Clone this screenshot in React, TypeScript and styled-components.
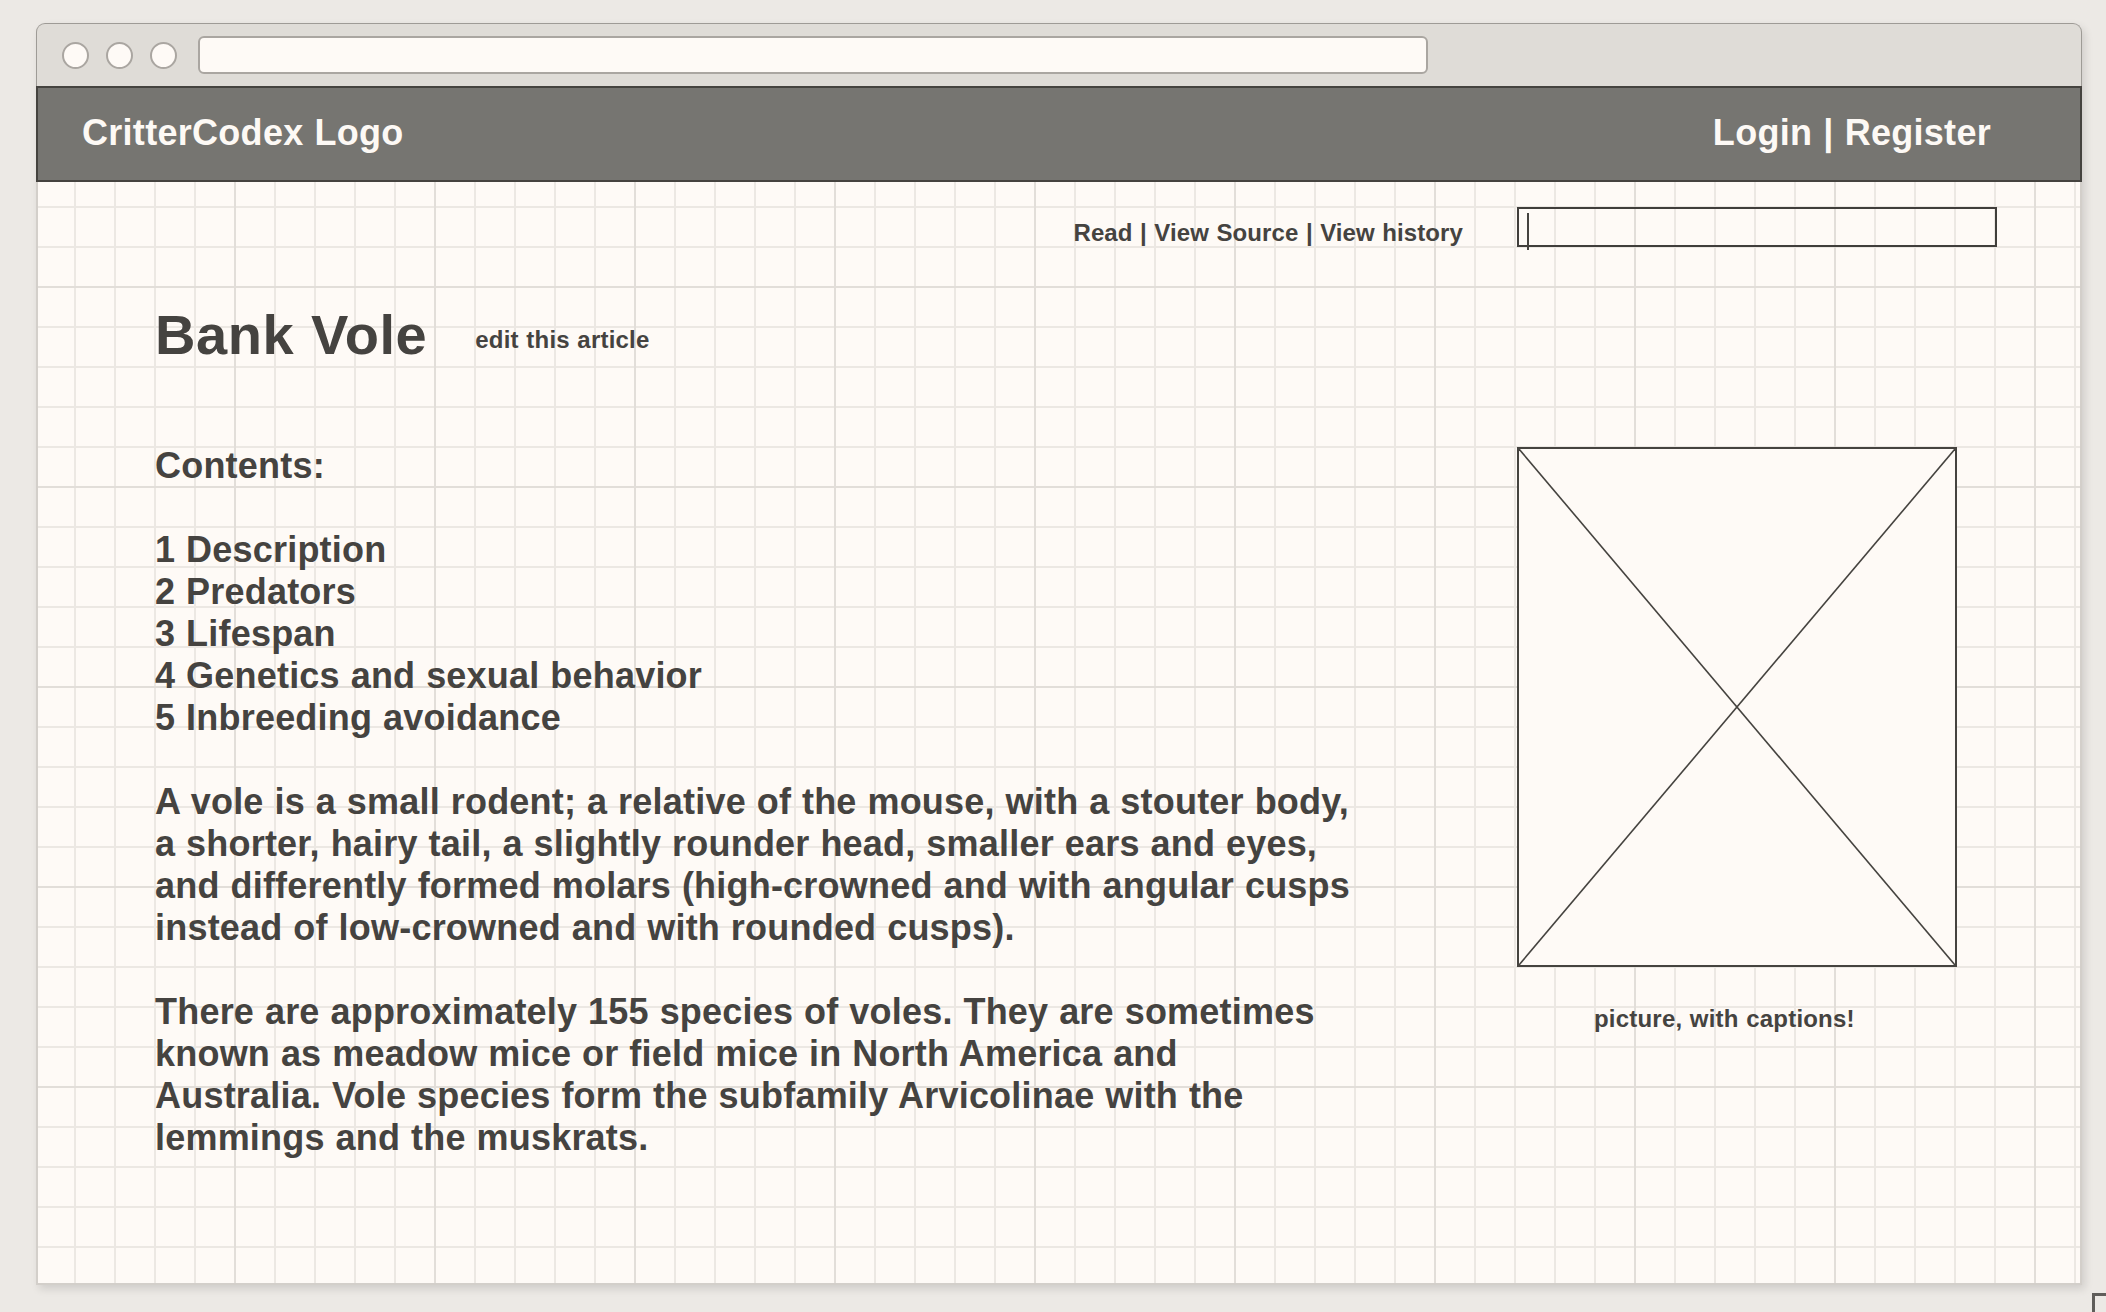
import React from "react";
import styled, { createGlobalStyle } from "styled-components";

const GlobalStyle = createGlobalStyle`
  html, body {
    margin: 0;
    padding: 0;
    overflow: hidden;
    background: #ece9e5;
    font-family: "Liberation Sans", Arial, Helvetica, sans-serif;
  }
  * { box-sizing: border-box; }
`;

const Page = styled.div`
  width: 2106px;
  height: 1312px;
  padding: 23px 0 0 36px;
  background: #ece9e5;
`;

const Window = styled.div`
  width: 2046px;
  height: 1262px;
  display: flex;
  flex-direction: column;
  box-shadow: 3px 4px 8px rgba(0, 0, 0, 0.12);
  border-radius: 9px 9px 0 0;
`;

const Chrome = styled.div`
  height: 63px;
  flex: none;
  display: flex;
  align-items: center;
  gap: 17px;
  padding-left: 25px;
  background: #dfdcd7;
  border: 1.5px solid #9e9b96;
  border-bottom: none;
  border-radius: 9px 9px 0 0;
`;

const Dot = styled.span`
  width: 27px;
  height: 27px;
  border-radius: 50%;
  background: #fefaf6;
  border: 2px solid #aaa6a1;
`;

const AddressBar = styled.div`
  width: 1230px;
  height: 38px;
  margin-left: 4px;
  border-radius: 6px;
  background: #fefaf6;
  border: 2px solid #aaa6a1;
`;

const Header = styled.header`
  height: 96px;
  flex: none;
  display: flex;
  align-items: center;
  justify-content: space-between;
  padding: 0 89px 3px 44px;
  background: #767571;
  border: 2px solid #45433f;
  color: #fdf9f5;
  font-size: 36px;
  font-weight: 700;
  line-height: 42px;
  letter-spacing: 0.008em;
  word-spacing: 0.02em;
`;

const Body = styled.main`
  flex: 1;
  display: flex;
  flex-direction: column;
  border: 2px solid #d3cfca;
  border-top: none;
  background-color: #fefaf6;
  background-image:
    linear-gradient(to right, #e2ded9 2px, transparent 2px),
    linear-gradient(to bottom, #e2ded9 2px, transparent 2px),
    linear-gradient(to right, #ece8e3 2px, transparent 2px),
    linear-gradient(to bottom, #ece8e3 2px, transparent 2px);
  background-size: 200px 200px, 200px 200px, 40px 40px, 40px 40px;
  background-position: 196px 0, 0 104px, 36px 0, 0 24px;
  color: #454340;
  font-weight: 700;
  letter-spacing: 0.013em;
  word-spacing: 0.04em;
`;

const TopBar = styled.div`
  display: flex;
  justify-content: flex-end;
  align-items: flex-start;
  gap: 54px;
  padding: 25px 83px 0 0;
`;

const NavLinks = styled.div`
  margin-top: 12px;
  font-size: 24px;
  line-height: 28px;
  letter-spacing: 0.004em;
  word-spacing: 0.03em;
`;

const SearchBox = styled.div`
  position: relative;
  width: 480px;
  height: 40px;
  border: 2px solid #403e3b;
`;

const Caret = styled.span`
  position: absolute;
  left: 8px;
  top: 4px;
  width: 2px;
  height: 37px;
  background: #45433f;
`;

const Content = styled.div`
  display: flex;
  padding: 0 123px 0 117px;
`;

const Article = styled.article`
  flex: 1;
  padding-top: 56px;
`;

const TitleRow = styled.div`
  display: flex;
  align-items: flex-start;
  gap: 48px;
`;

const Title = styled.h1`
  margin: 0;
  font-size: 56px;
  line-height: 64px;
  font-weight: 700;
  letter-spacing: 0.01em;
`;

const EditLink = styled.span`
  margin-top: 23px;
  font-size: 24px;
  line-height: 28px;
`;

const TextBlock = styled.div`
  margin-top: 78px;
  font-size: 36px;
  line-height: 42px;
  white-space: nowrap;
`;

const Para = styled.p`
  margin: 0 0 42px;
`;

const TocList = styled.ol`
  list-style: none;
  margin: 0 0 42px;
  padding: 0;
`;

const Sidebar = styled.aside`
  width: 440px;
  flex: none;
  padding-top: 200px;
`;

const ImageBox = styled.div`
  height: 520px;
  border: 2px solid #45433f;
  background: #fefaf6;
  svg {
    display: block;
    width: 100%;
    height: 100%;
  }
`;

const Caption = styled.div`
  margin-top: 38px;
  padding-left: 77px;
  font-size: 24px;
  line-height: 28px;
`;

const ResizeCorner = styled.span`
  position: fixed;
  left: 2092px;
  top: 1293px;
  width: 20px;
  height: 25px;
  border-top: 3px solid #5f5d5a;
  border-left: 3px solid #5f5d5a;
`;

const toc = [
  "1 Description",
  "2 Predators",
  "3 Lifespan",
  "4 Genetics and sexual behavior",
  "5 Inbreeding avoidance",
];

const para1 = [
  "A vole is a small rodent; a relative of the mouse, with a stouter body,",
  "a shorter, hairy tail, a slightly rounder head, smaller ears and eyes,",
  "and differently formed molars (high-crowned and with angular cusps",
  "instead of low-crowned and with rounded cusps).",
];

const para2 = [
  "There are approximately 155 species of voles. They are sometimes",
  "known as meadow mice or field mice in North America and",
  "Australia. Vole species form the subfamily Arvicolinae with the",
  "lemmings and the muskrats.",
];

const Lines: React.FC<{ lines: string[] }> = ({ lines }) => (
  <>
    {lines.map((l, i) => (
      <React.Fragment key={i}>
        {l}
        {i < lines.length - 1 && <br />}
      </React.Fragment>
    ))}
  </>
);

export default function App() {
  return (
    <Page>
      <GlobalStyle />
      <Window>
        <Chrome>
          <Dot />
          <Dot />
          <Dot />
          <AddressBar />
        </Chrome>
        <Header>
          <span>CritterCodex Logo</span>
          <span>Login | Register</span>
        </Header>
        <Body>
          <TopBar>
            <NavLinks>Read | View Source | View history</NavLinks>
            <SearchBox>
              <Caret />
            </SearchBox>
          </TopBar>
          <Content>
            <Article>
              <TitleRow>
                <Title>Bank Vole</Title>
                <EditLink>edit this article</EditLink>
              </TitleRow>
              <TextBlock>
                <Para>Contents:</Para>
                <TocList>
                  {toc.map((t) => (
                    <li key={t}>{t}</li>
                  ))}
                </TocList>
                <Para>
                  <Lines lines={para1} />
                </Para>
                <Para>
                  <Lines lines={para2} />
                </Para>
              </TextBlock>
            </Article>
            <Sidebar>
              <ImageBox>
                <svg>
                  <line x1="0" y1="0" x2="100%" y2="100%" stroke="#45433f" strokeWidth="1.6" />
                  <line x1="100%" y1="0" x2="0" y2="100%" stroke="#45433f" strokeWidth="1.6" />
                </svg>
              </ImageBox>
              <Caption>picture, with captions!</Caption>
            </Sidebar>
          </Content>
        </Body>
      </Window>
      <ResizeCorner />
    </Page>
  );
}
